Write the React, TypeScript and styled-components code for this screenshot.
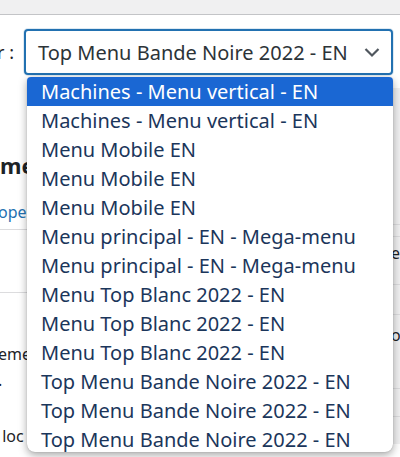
import { createGlobalStyle } from 'styled-components';
import styled from 'styled-components';

const GlobalStyle = createGlobalStyle`
  html, body {
    margin: 0;
    padding: 0;
    background: #fff;
    overflow: hidden;
  }

  body {
    font-family: "Noto Sans", "Open Sans", sans-serif;
    color: #1d2327;
  }
`;

const Page = styled.div`
  position: relative;
  width: 400px;
  height: 457px;
  overflow: hidden;
  background: #fff;
`;

const TopBar = styled.div`
  height: 14px;
  background: #f0f0f1;
  border-bottom: 1px solid #c3c4c7;
`;

const SelectRow = styled.div`
  display: flex;
  align-items: center;
  margin-top: 14px;
  height: 46px;
`;

const Label = styled.div`
  width: 24px;
  overflow: hidden;
  display: flex;
  justify-content: flex-end;
  white-space: nowrap;
  font-size: 18px;
  color: #1d2327;

  span {
    padding-right: 10px;
  }
`;

const SelectBox = styled.div`
  box-sizing: border-box;
  width: 369px;
  height: 46px;
  border: 2px solid #2271b1;
  border-radius: 4px;
  display: flex;
  align-items: center;
  justify-content: space-between;
  padding: 0 10px 0 12px;
  font-size: 20px;
  color: #2c3338;
  background: #fff;
  box-shadow: 0 0 0 1px rgba(34, 113, 177, 0.15);
`;

const Chevron = () => (
  <svg width="18" height="18" viewBox="0 0 18 18">
    <path d="M2.5 6 L9 12.5 L15.5 6" fill="none" stroke="#50575e" strokeWidth="2.2" />
  </svg>
);

const Body = styled.div`
  display: flex;
  margin-top: 13px;
`;

const LeftCol = styled.div`
  width: 27px;
  overflow: hidden;
  white-space: nowrap;
  display: flex;
  flex-direction: column;
`;

const Middle = styled.div`
  flex: 1;
`;

const RightCol = styled.div`
  width: 7px;
  background: #f0f0f1;
  display: flex;
  flex-direction: column;
  overflow: hidden;
  white-space: nowrap;
`;

interface BlockProps {
  h: number;
  line?: boolean;
}

const Block = styled.div<BlockProps>`
  height: ${({ h }) => h}px;
  flex-shrink: 0;
  display: flex;
  align-items: flex-end;
  box-sizing: border-box;
  ${({ line }) => (line ? 'border-bottom: 1px solid #dcdcde;' : '')}
`;

const Heading = styled.span`
  font-size: 22px;
  font-weight: 700;
  color: #1d2327;
  line-height: 1;
`;

const LinkText = styled.span`
  font-size: 16px;
  color: #2271b1;
  margin-left: -2px;
  line-height: 1;
`;

const Plain = styled.span`
  font-size: 16px;
  color: #1d2327;
  margin-left: -2px;
  line-height: 1;
`;

const Dropdown = styled.ul`
  position: absolute;
  top: 77px;
  left: 27px;
  width: 366px;
  height: 375px;
  margin: 0;
  padding: 0;
  list-style: none;
  background: #fff;
  border-radius: 4px 4px 8px 8px;
  box-shadow: 0 3px 8px rgba(0, 0, 0, 0.35), 0 0 1px rgba(0, 0, 0, 0.3);
  overflow: hidden;
`;

interface OptionProps {
  selected?: boolean;
}

const Option = styled.li<OptionProps>`
  height: 29px;
  line-height: 29px;
  padding-left: 14px;
  font-size: 20px;
  white-space: nowrap;
  color: ${({ selected }) => (selected ? '#fff' : '#1b365b')};
  background: ${({ selected }) => (selected ? '#1a67d3' : 'transparent')};
`;

const BottomText = styled.div`
  position: absolute;
  left: 40px;
  top: 453px;
  font-size: 18px;
  color: #1d2327;
  white-space: nowrap;
`;

const options = [
  'Machines - Menu vertical - EN',
  'Machines - Menu vertical - EN',
  'Menu Mobile EN',
  'Menu Mobile EN',
  'Menu Mobile EN',
  'Menu principal - EN - Mega-menu',
  'Menu principal - EN - Mega-menu',
  'Menu Top Blanc 2022 - EN',
  'Menu Top Blanc 2022 - EN',
  'Menu Top Blanc 2022 - EN',
  'Top Menu Bande Noire 2022 - EN',
  'Top Menu Bande Noire 2022 - EN',
  'Top Menu Bande Noire 2022 - EN',
];

export default function App() {
  return (
    <>
      <GlobalStyle />
      <Page>
        <TopBar />
        <SelectRow>
          <Label>
            <span>Sélectionnez le menu à modifier :</span>
          </Label>
          <SelectBox>
            <span>Top Menu Bande Noire 2022 - EN</span>
            <Chevron />
          </SelectBox>
        </SelectRow>
        <Body>
          <LeftCol>
            <Block h={88}>
              <Heading>menu</Heading>
            </Block>
            <Block h={44}>
              <LinkText>ope)</LinkText>
            </Block>
            <Block h={10} line />
            <Block h={63} line />
            <Block h={69}>
              <Plain>ement</Plain>
            </Block>
            <Block h={26}>
              <Plain>.</Plain>
            </Block>
            <Block h={56}>
              <Plain>&nbsp;loc</Plain>
            </Block>
          </LeftCol>
          <Middle />
          <RightCol>
            <Block h={137} line />
            <Block h={12} line />
            <Block h={24}>
              <Plain>e</Plain>
            </Block>
            <Block h={24} line />
            <Block h={30} line />
            <Block h={28}>
              <Plain>oc</Plain>
            </Block>
            <Block h={46} line />
            <Block h={28} line />
          </RightCol>
        </Body>
        <Dropdown>
          {options.map((label, i) => (
            <Option key={i} selected={i === 0}>
              {label}
            </Option>
          ))}
        </Dropdown>
        <BottomText>il a été publié dans le menu</BottomText>
      </Page>
    </>
  );
}
